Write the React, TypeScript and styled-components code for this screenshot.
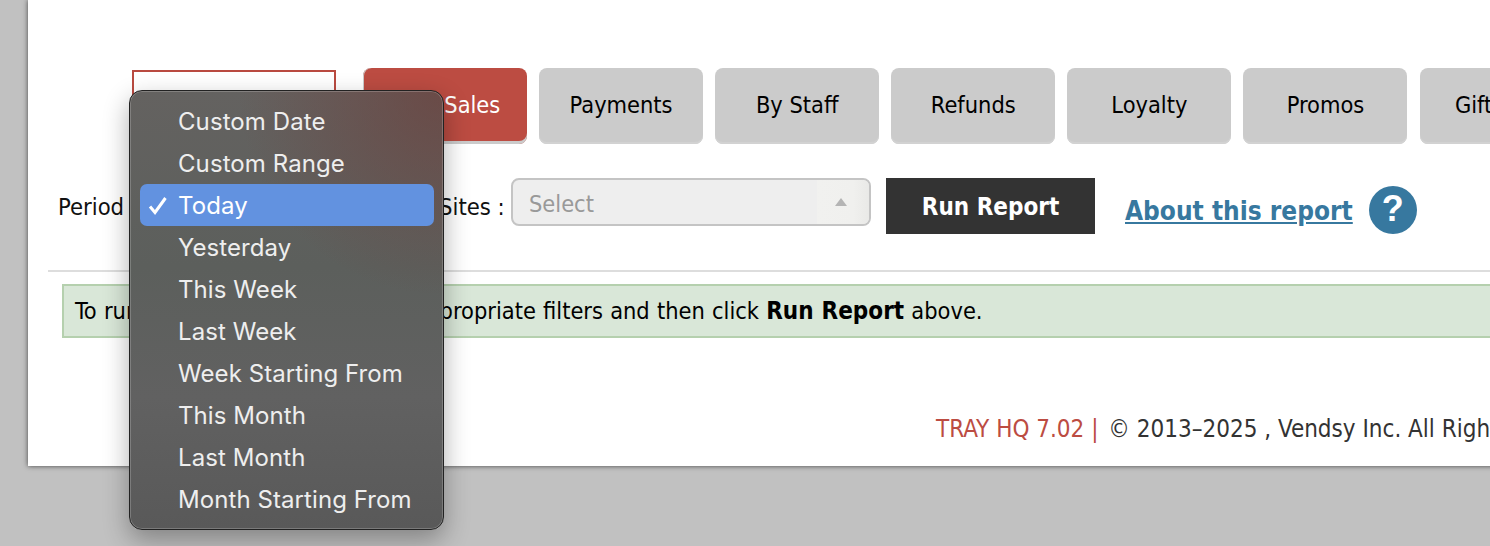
import styled, { createGlobalStyle } from 'styled-components';

const TABS = ['Item Sales', 'Payments', 'By Staff', 'Refunds', 'Loyalty', 'Promos', 'Gift Card'];
const PERIODS = [
  'Custom Date',
  'Custom Range',
  'Today',
  'Yesterday',
  'This Week',
  'Last Week',
  'Week Starting From',
  'This Month',
  'Last Month',
  'Month Starting From',
];

function App() {
  return (
    <>
      <GlobalStyle />
      <Page>
        <Panel>
          <TabRow>
            <ReportBox />
            <Tabs>
              {TABS.map((tab, i) => (
                <Tab key={tab} $active={i === 0}>
                  {tab}
                </Tab>
              ))}
            </Tabs>
          </TabRow>

          <FilterRow>
            <Label>Period :</Label>
            <PeriodField>
              <Menu>
                {PERIODS.map((period) => (
                  <MenuItem key={period} $selected={period === 'Today'}>
                    {period === 'Today' && (
                      <Check viewBox="0 0 20 20">
                        <path d="M2 11.5 L7 17.5 L17.5 3" />
                      </Check>
                    )}
                    {period}
                  </MenuItem>
                ))}
              </Menu>
            </PeriodField>
            <SitesLabel>Sites :</SitesLabel>
            <SitesSelect>
              Select
              <Caret>
                <svg width="14" height="10" viewBox="0 0 14 10">
                  <path d="M7 1 L13 9 H1 Z" fill="#b4b4b4" />
                </svg>
              </Caret>
            </SitesSelect>
            <RunButton>Run Report</RunButton>
            <AboutLink>About this report</AboutLink>
            <HelpIcon>?</HelpIcon>
          </FilterRow>

          <Divider />

          <Notice>
            To run this report, select all the appropriate filters and then click <b>Run Report</b> above.
          </Notice>

          <Footer>
            <Version>TRAY HQ 7.02 | </Version>© 2013–2025 , Vendsy Inc. All Rights Reserved.
          </Footer>
        </Panel>
      </Page>
    </>
  );
}

const GlobalStyle = createGlobalStyle`
  html, body {
    margin: 0;
    height: 100%;
    overflow: hidden;
    background: #c1c1c1;
  }
  body {
    font-family: "DejaVu Sans Condensed", "DejaVu Sans", sans-serif;
    font-stretch: condensed;
    color: #000;
  }
  b {
    font-size: 24px;
  }
`;

const Page = styled.div`
  width: 1490px;
  height: 546px;
  padding-left: 28px;
  box-sizing: border-box;
  overflow: hidden;
`;

const Panel = styled.div`
  width: 1600px;
  height: 466px;
  background: #fff;
  box-shadow: 0 0 5px rgba(0, 0, 0, 0.65);
  padding-top: 68px;
  box-sizing: border-box;
`;

const TabRow = styled.div`
  display: flex;
  align-items: flex-start;
  padding-left: 104px;
`;

const ReportBox = styled.div`
  width: 204px;
  height: 46px;
  margin-top: 2px;
  box-sizing: border-box;
  border: 2px solid #b94a40;
  background: #fff;
  flex: none;
`;

const Tabs = styled.div`
  display: flex;
  gap: 12.1px;
  margin-left: 27px;
`;

const Tab = styled.div<{ $active: boolean }>`
  width: 164px;
  height: 76px;
  box-sizing: border-box;
  flex: none;
  display: flex;
  align-items: center;
  justify-content: center;
  padding-bottom: 2px;
  border-radius: 8px;
  font-size: 23.4px;
  white-space: nowrap;
  background: ${({ $active }) => ($active ? '#bc4c42' : '#cbcbcb')};
  color: ${({ $active }) => ($active ? '#fff' : '#000')};
  box-shadow: ${({ $active }) =>
    $active ? 'inset 0 -3px 0 #cbcbcb, inset 1px 0 0 #cbcbcb' : 'inset 0 -2px 0 #d2d2d2'};
`;

const FilterRow = styled.div`
  display: flex;
  align-items: flex-start;
  margin-top: 34px;
  padding-left: 30px;
`;

const Label = styled.div`
  width: 74px;
  flex: none;
  font-size: 23.6px;
  line-height: 58px;
  color: #111;
  white-space: nowrap;
`;

const PeriodField = styled.div`
  position: relative;
  width: 309px;
  height: 48px;
  flex: none;
`;

const Menu = styled.div`
  position: absolute;
  top: -88px;
  left: -3px;
  width: 315px;
  height: 440px;
  box-sizing: border-box;
  padding: 9px 9px 0 10px;
  border-radius: 13px;
  border: 1px solid #222;
  background:
    radial-gradient(circle at 100% 0, rgba(110, 62, 58, 0.65), rgba(110, 62, 58, 0) 38%),
    linear-gradient(180deg, #646260 0%, #5c5f5c 40%, #616161 70%, #595959 100%);
  box-shadow:
    inset 0 0 0 1px rgba(255, 255, 255, 0.2),
    0 10px 26px rgba(0, 0, 0, 0.32);
  font-family: Inter, sans-serif;
  font-stretch: normal;
  z-index: 5;
`;

const MenuItem = styled.div<{ $selected: boolean }>`
  position: relative;
  height: 42px;
  line-height: 44px;
  padding-left: 38px;
  border-radius: 7px;
  font-size: 24px;
  letter-spacing: 0.08px;
  white-space: nowrap;
  color: ${({ $selected }) => ($selected ? '#fff' : '#eeeeee')};
  background: ${({ $selected }) => ($selected ? '#6292e0' : 'transparent')};
`;

const Check = styled.svg`
  position: absolute;
  left: 8px;
  top: 11px;
  width: 20px;
  height: 20px;
  fill: none;
  stroke: #fff;
  stroke-width: 3;
`;

const SitesLabel = styled.div`
  width: 70px;
  flex: none;
  margin-left: -2px;
  padding-right: 2px;
  font-size: 23.6px;
  line-height: 58px;
  color: #111;
  white-space: nowrap;
`;

const SitesSelect = styled.div`
  position: relative;
  width: 360px;
  height: 48px;
  flex: none;
  box-sizing: border-box;
  border: 2px solid #c4c4c4;
  border-radius: 8px;
  background: #eeeeee;
  color: #999;
  font-size: 23.4px;
  line-height: 48px;
  padding-left: 16px;
`;

const Caret = styled.div`
  position: absolute;
  top: 0;
  bottom: 0;
  right: 0;
  width: 52px;
  padding-right: 4px;
  box-sizing: border-box;
  border-radius: 0 6px 6px 0;
  background: linear-gradient(90deg, #f1f1ef, #f0f0ee 70%, #e9e9e7);
  display: flex;
  align-items: center;
  justify-content: center;
`;

const RunButton = styled.div`
  width: 209px;
  height: 56px;
  flex: none;
  margin-left: 15px;
  background: #333;
  color: #fff;
  font-size: 24px;
  font-weight: 700;
  line-height: 58px;
  text-align: center;
`;

const AboutLink = styled.a`
  margin-left: 30px;
  flex: none;
  color: #37789f;
  font-size: 26px;
  font-weight: 700;
  line-height: 67px;
  text-decoration: underline;
  white-space: nowrap;
`;

const HelpIcon = styled.div`
  width: 48px;
  height: 48px;
  flex: none;
  margin: 8px 0 0 16px;
  border-radius: 50%;
  background: #37789f;
  color: #fff;
  font-family: "Liberation Sans", sans-serif;
  font-size: 36px;
  font-weight: 700;
  line-height: 46px;
  text-align: center;
`;

const Divider = styled.div`
  height: 2px;
  margin: 25px 0 0 20px;
  background: #dddddd;
`;

const Notice = styled.div`
  height: 54px;
  margin: 12px 0 0 34px;
  box-sizing: border-box;
  border: 2px solid #b5d0ae;
  background: #d9e7d8;
  padding-left: 11px;
  font-size: 23.4px;
  line-height: 50px;
  word-spacing: 0.5px;
  white-space: nowrap;
`;

const Footer = styled.div`
  margin-top: 74px;
  padding-left: 908px;
  font-size: 24px;
  line-height: 34px;
  color: #333;
  white-space: nowrap;
`;

const Version = styled.span`
  color: #bc4c42;
  margin-right: 3px;
`;

export default App;
